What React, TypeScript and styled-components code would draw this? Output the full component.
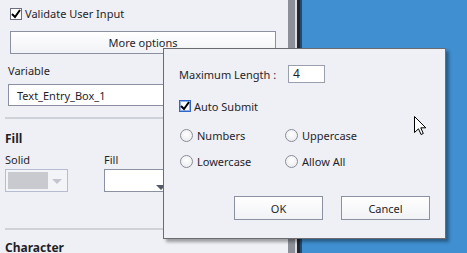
import React from 'react';
import styled, { createGlobalStyle } from 'styled-components';

const GlobalStyle = createGlobalStyle`
  html, body {
    margin: 0;
    padding: 0;
    width: 467px;
    height: 253px;
    overflow: hidden;
    background: #3f8fd1;
  }
  body {
    font-family: 'Noto Sans', 'Open Sans', sans-serif;
    font-size: 11px;
    color: #1f1f2a;
  }
`;

const Screen = styled.div`
  position: relative;
  display: flex;
  width: 467px;
  height: 253px;
  overflow: hidden;
`;

const Panel = styled.div`
  width: 288px;
  flex: none;
  background: #eff0f5;
  display: flex;
  flex-direction: column;
  overflow: hidden;

  & > * {
    flex: none;
  }
`;

const Splitter = styled.div`
  width: 7px;
  flex: none;
  background: #8e9099;
`;

const Edge = styled.div`
  width: 7px;
  flex: none;
  background: linear-gradient(to right, #dcdde2 0 2px, #25272c 2px 5px, #1f4a72 5px);
`;

const Stage = styled.div`
  flex: 1;
  background: #3f8fd1;
`;

const CheckRow = styled.label`
  display: flex;
  align-items: center;
  gap: 3px;
  margin: 6px 0 0 10px;
  height: 16px;
  line-height: 16px;
`;

const Box = styled.span<{ $focused?: boolean }>`
  width: 10px;
  height: 10px;
  flex: none;
  background: #fff;
  border: 1px solid ${(p) => (p.$focused ? '#2f64c8' : '#6c6f7a')};
  box-shadow: ${(p) => (p.$focused ? 'inset 0 0 0 1px #8fb2ec' : 'none')};
  display: flex;
  align-items: center;
  justify-content: center;
  svg { display: block; }
`;

const WideButton = styled.div`
  margin: 9px 0 0 10px;
  width: 264px;
  height: 21px;
  border: 1px solid #8c91a1;
  background: linear-gradient(#ffffff, #f1f2f6);
  display: flex;
  align-items: center;
  justify-content: center;
`;

const Label = styled.div<{ $bold?: boolean }>`
  height: 16px;
  line-height: 16px;
  font-weight: ${(p) => (p.$bold ? 700 : 400)};
`;

const FieldLabel = styled(Label)`
  margin: 9px 0 0 8px;
`;

const TextInput = styled.div`
  margin: 5px 0 0 8px;
  width: 258px;
  height: 20px;
  padding-left: 8px;
  border: 1px solid #8c91a1;
  background: #fff;
  display: flex;
  align-items: center;
`;

const Rule = styled.div<{ $top: number }>`
  margin: ${(p) => p.$top}px 0 0 5px;
  height: 2px;
  background: #cfd1d8;
`;

const Section = styled(Label)<{ $top: number }>`
  margin: ${(p) => p.$top}px 0 0 5px;
  font-size: 12px;
`;

const PickRow = styled.div`
  display: flex;
  gap: 36px;
  margin: 5px 0 0 5px;
`;

const Pick = styled.div`
  display: flex;
  flex-direction: column;
  gap: 1px;
`;

const Swatch = styled.div`
  width: 59px;
  height: 21px;
  border: 1px solid #b6bdd0;
  background: #f3f4f8;
  display: flex;
  align-items: center;
  padding-left: 2px;
`;

const SwatchColor = styled.div`
  width: 40px;
  height: 17px;
  background: #c9cad0;
`;

const Select = styled.div`
  width: 120px;
  height: 21px;
  border: 1px solid #8c91a1;
  background: #fff;
  position: relative;
`;

const Arrow = styled.span<{ $color: string; $left: number; $top: number }>`
  position: absolute;
  left: ${(p) => p.$left}px;
  top: ${(p) => p.$top}px;
  width: 0;
  height: 0;
  border-left: 5px solid transparent;
  border-right: 5px solid transparent;
  border-top: 5px solid ${(p) => p.$color};
`;

const SwatchWrap = styled.div`
  position: relative;
`;

const Dialog = styled.div`
  position: absolute;
  left: 163px;
  top: 48px;
  width: 283px;
  height: 191px;
  box-sizing: border-box;
  border: 1px solid #6b6b70;
  background: #eff0f6;
  box-shadow: 3px 3px 3px rgba(0, 0, 0, 0.35);
  padding: 16px 15px 0 15px;
  display: flex;
  flex-direction: column;
`;

const LengthRow = styled.div`
  display: flex;
  align-items: center;
  height: 18px;
`;

const LengthLabel = styled.span`
  width: 109px;
`;

const SmallInput = styled.div`
  width: 31px;
  height: 16px;
  border: 1px solid #9a9fb0;
  background: #fff;
  padding-left: 4px;
  line-height: 16px;
  font-size: 12px;
`;

const AutoRow = styled.label`
  display: flex;
  align-items: center;
  gap: 3px;
  margin-top: 14px;
  height: 18px;
`;

const Radios = styled.div`
  display: grid;
  grid-template-columns: 105px 105px;
  grid-auto-rows: 26px;
  margin: 7px 0 0 1px;
  align-items: center;
`;

const Radio = styled.label`
  display: flex;
  align-items: center;
  gap: 4px;
`;

const Dot = styled.span`
  width: 11px;
  height: 11px;
  border-radius: 50%;
  border: 1px solid #8a8d96;
  background: radial-gradient(circle at 50% 40%, #ffffff, #e6e7ec);
  flex: none;
`;

const Buttons = styled.div`
  display: flex;
  justify-content: flex-end;
  gap: 18px;
  margin-top: 22px;
`;

const DialogButton = styled.div`
  width: 87px;
  height: 22px;
  border: 1px solid #8c91a1;
  background: linear-gradient(#ffffff, #f1f2f6);
  display: flex;
  align-items: center;
  justify-content: center;
`;

const Pointer = styled.svg`
  position: absolute;
  left: 414px;
  top: 116px;
`;

const Check = () => (
  <svg width="10" height="10" viewBox="0 0 10 10">
    <path d="M1 5 L4 8 L9 1" fill="none" stroke="#000" strokeWidth="2" />
  </svg>
);

export default function App() {
  return (
    <>
      <GlobalStyle />
      <Screen>
        <Panel>
          <CheckRow>
            <Box>
              <Check />
            </Box>
            Validate User Input
          </CheckRow>
          <WideButton>More options</WideButton>
          <FieldLabel>Variable</FieldLabel>
          <TextInput>Text_Entry_Box_1</TextInput>
          <Rule $top={11} />
          <Section $bold $top={12}>Fill</Section>
          <PickRow>
            <Pick>
              <Label>Solid</Label>
              <SwatchWrap>
                <Swatch>
                  <SwatchColor />
                </Swatch>
                <Arrow $color="#c3c6cf" $left={47} $top={10} />
              </SwatchWrap>
            </Pick>
            <Pick>
              <Label>Fill</Label>
              <Select>
                <Arrow $color="#555a66" $left={51} $top={15} />
              </Select>
            </Pick>
          </PickRow>
          <Rule $top={36} />
          <Section $bold $top={10}>Character</Section>
        </Panel>
        <Splitter />
        <Edge />
        <Stage />
        <Dialog>
          <LengthRow>
            <LengthLabel>Maximum Length :</LengthLabel>
            <SmallInput>4</SmallInput>
          </LengthRow>
          <AutoRow>
            <Box $focused>
              <Check />
            </Box>
            Auto Submit
          </AutoRow>
          <Radios>
            <Radio>
              <Dot />
              Numbers
            </Radio>
            <Radio>
              <Dot />
              Uppercase
            </Radio>
            <Radio>
              <Dot />
              Lowercase
            </Radio>
            <Radio>
              <Dot />
              Allow All
            </Radio>
          </Radios>
          <Buttons>
            <DialogButton>OK</DialogButton>
            <DialogButton>Cancel</DialogButton>
          </Buttons>
        </Dialog>
        <Pointer width="13" height="20" viewBox="0 0 13 20">
          <path
            d="M0.5 0.5 L0.5 16.5 L4.5 12.8 L7 18.5 L9.3 17.5 L6.8 11.8 L11.8 11.8 Z"
            fill="#fff"
            stroke="#000"
            strokeWidth="1"
          />
        </Pointer>
      </Screen>
    </>
  );
}
